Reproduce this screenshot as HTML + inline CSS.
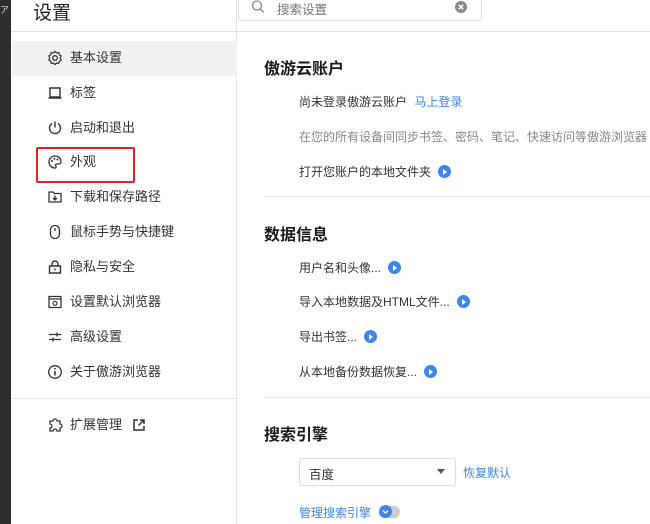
<!DOCTYPE html>
<html><head><meta charset="utf-8"><style>
*{margin:0;padding:0;box-sizing:border-box}
body{width:650px;height:524px;overflow:hidden;background:#fff;position:relative;font-family:"Liberation Sans","Noto Sans CJK SC",sans-serif;color:#222}
.a{position:absolute;white-space:nowrap}
.strip{left:0;top:0;width:11px;height:524px;background:#2e2e2e}
.side{left:11px;top:0;width:226px;height:524px;border-right:1px solid #e3e3e3}
.hline{left:11px;top:31px;width:639px;height:1px;background:#e3e3e3}
.item{font-size:13px;color:#333;line-height:16px}
.ic{position:absolute;left:47px;width:16px;height:16px}
.h{font-size:16px;font-weight:bold;color:#1a1a1a}
.t{font-size:12px;color:#333}
.play{display:inline-block;width:13px;height:13px;border-radius:50%;background:#3d86ef;position:relative;vertical-align:-2px;margin-left:7px}
.play:after{content:"";position:absolute;left:5px;top:3.5px;border-left:4px solid #fff;border-top:3px solid transparent;border-bottom:3px solid transparent}
.blue{color:#3d86ef}
</style></head><body>
<div class="a strip"></div>
<div class="a" style="left:0;top:3px;width:8px;height:8px;color:#ddd;font-size:9px">ア</div>
<div class="a side"></div>
<div class="a" style="left:33px;top:-2px;font-size:19px;color:#222">设置</div>
<div class="a" style="left:238px;top:-6px;width:244px;height:27px;border:1px solid #ddd;border-radius:3px;background:#fff"></div>
<svg class="a" style="left:251px;top:0" width="14" height="14" viewBox="0 0 14 14"><circle cx="6" cy="5.5" r="4.5" fill="none" stroke="#888" stroke-width="1.3"/><path d="M9.3 9l3.5 3.5" stroke="#888" stroke-width="1.3"/></svg>
<div class="a" style="left:277px;top:-1px;font-size:12.5px;color:#777">搜索设置</div>
<svg class="a" style="left:455px;top:1px" width="12" height="12" viewBox="0 0 12 12"><circle cx="6" cy="6" r="6" fill="#888"/><path d="M3.8 3.8l4.4 4.4M8.2 3.8l-4.4 4.4" stroke="#fff" stroke-width="1.4"/></svg>
<div class="a hline"></div>
<div class="a" style="left:12px;top:41px;width:225px;height:35px;background:#f1f1f1"></div>

<svg class="ic a" style="top:50px" viewBox="0 0 16 16"><circle cx="8" cy="8" r="2.3" fill="none" stroke="#333" stroke-width="1.3"/><path d="M8 1.5l1.6 1.5 2.2-.3.5 2.1 1.9 1.2-1 2 1 2-1.9 1.2-.5 2.1-2.2-.3L8 14.5l-1.6-1.5-2.2.3-.5-2.1-1.9-1.2 1-2-1-2 1.9-1.2.5-2.1 2.2.3z" fill="none" stroke="#333" stroke-width="1.2"/></svg>
<div class="a item" style="left:70px;top:50px">基本设置</div>
<svg class="ic a" style="top:85px" viewBox="0 0 16 16"><path d="M3 3h10v9H3zM1.5 13h13" fill="none" stroke="#333" stroke-width="1.4"/></svg>
<div class="a item" style="left:70px;top:85px">标签</div>
<svg class="ic a" style="top:120px" viewBox="0 0 16 16"><path d="M5 3.5A5.5 5.5 0 1 0 11 3.5M8 1.5v6" fill="none" stroke="#333" stroke-width="1.4"/></svg>
<div class="a item" style="left:70px;top:120px">启动和退出</div>
<svg class="ic a" style="top:154px" viewBox="0 0 16 16"><path d="M8 2a6 6 0 1 0 0 12c1.5 0 1.3-1.5.7-2.3-.6-.8 0-1.7 1-1.7H12a2.5 2.5 0 0 0 2-2.5C14 4.5 11.5 2 8 2z" fill="none" stroke="#333" stroke-width="1.3"/><circle cx="5" cy="7" r="1" fill="#333"/><circle cx="7.5" cy="4.8" r="1" fill="#333"/><circle cx="10.5" cy="5.5" r="1" fill="#333"/></svg>
<div class="a item" style="left:70px;top:154px">外观</div>
<div class="a" style="left:36px;top:147px;width:99px;height:36px;border:2px solid #e8201f;border-radius:2px"></div>
<svg class="ic a" style="top:189px" viewBox="0 0 16 16"><path d="M2 3h4l1.5 1.5H14V13H2zM8 6.5v4.5M6 9l2 2 2-2" fill="none" stroke="#333" stroke-width="1.3"/></svg>
<div class="a item" style="left:70px;top:189px">下载和保存路径</div>
<svg class="ic a" style="top:224px" viewBox="0 0 16 16"><rect x="3.5" y="1.5" width="9" height="13" rx="4.5" fill="none" stroke="#333" stroke-width="1.3"/><path d="M8 4v3" stroke="#333" stroke-width="1.3"/></svg>
<div class="a item" style="left:70px;top:224px">鼠标手势与快捷键</div>
<svg class="ic a" style="top:259px" viewBox="0 0 16 16"><path d="M5 7V5a3 3 0 0 1 6 0v2M2.5 7h11v7h-11zM8 9.5v2" fill="none" stroke="#333" stroke-width="1.4"/></svg>
<div class="a item" style="left:70px;top:259px">隐私与安全</div>
<svg class="ic a" style="top:294px" viewBox="0 0 16 16"><path d="M2 2.5h12v11H2zM2 5h12" fill="none" stroke="#333" stroke-width="1.3"/><circle cx="8" cy="9.3" r="2" fill="none" stroke="#333" stroke-width="1.2"/></svg>
<div class="a item" style="left:70px;top:294px">设置默认浏览器</div>
<svg class="ic a" style="top:329px" viewBox="0 0 16 16"><path d="M2 5.5h12M2 10.5h12M10 3.5v4M6 8.5v4" fill="none" stroke="#333" stroke-width="1.3"/></svg>
<div class="a item" style="left:70px;top:329px">高级设置</div>
<svg class="ic a" style="top:364px" viewBox="0 0 16 16"><circle cx="8" cy="8" r="6.3" fill="none" stroke="#333" stroke-width="1.3"/><path d="M8 7v4.5" stroke="#333" stroke-width="1.5"/><circle cx="8" cy="4.8" r=".9" fill="#333"/></svg>
<div class="a item" style="left:70px;top:364px">关于傲游浏览器</div>
<div class="a" style="left:12px;top:398px;width:225px;height:1px;background:#e3e3e3"></div>
<svg class="ic a" style="top:417px" viewBox="0 0 16 16"><path d="M3 4h3a2 2 0 0 1 4 0h3v3a2 2 0 0 1 0 4v3h-3a2 2 0 0 0-4 0H3v-3a2 2 0 0 0 0-4z" fill="none" stroke="#333" stroke-width="1.3"/></svg>
<div class="a item" style="left:70px;top:417px">扩展管理</div>
<svg class="a" style="left:132px;top:418px" width="14" height="14" viewBox="0 0 14 14"><path d="M6 2H2v10h10V8M8 2h4v4M12 2L6.5 7.5" fill="none" stroke="#333" stroke-width="1.5"/></svg>

<div class="a h" style="left:264px;top:55px">傲游云账户</div>
<div class="a t" style="left:299px;top:93px">尚未登录傲游云账户 <span class="blue" style="margin-left:4px">马上登录</span></div>
<div class="a t" style="left:299px;top:128px;color:#888">在您的所有设备间同步书签、密码、笔记、快速访问等傲游浏览器</div>
<div class="a t" style="left:299px;top:163px">打开您账户的本地文件夹<span class="play"></span></div>
<div class="a" style="left:264px;top:196px;width:386px;height:1px;background:#e3e3e3"></div>
<div class="a h" style="left:264px;top:221px">数据信息</div>
<div class="a t" style="left:299px;top:259px">用户名和头像...<span class="play"></span></div>
<div class="a t" style="left:299px;top:293px">导入本地数据及HTML文件...<span class="play"></span></div>
<div class="a t" style="left:299px;top:328px">导出书签...<span class="play"></span></div>
<div class="a t" style="left:299px;top:363px">从本地备份数据恢复...<span class="play"></span></div>
<div class="a" style="left:264px;top:397px;width:386px;height:1px;background:#e3e3e3"></div>
<div class="a h" style="left:264px;top:421px">搜索引擎</div>
<div class="a" style="left:299px;top:458px;width:157px;height:28px;border:1px solid #ddd;border-radius:3px"></div>
<div class="a t" style="left:309px;top:464px;font-size:12.5px">百度</div>
<div class="a" style="left:437px;top:469px;border-top:5px solid #555;border-left:4.5px solid transparent;border-right:4.5px solid transparent"></div>
<div class="a t blue" style="left:463px;top:464px">恢复默认</div>
<div class="a t blue" style="left:299px;top:504px">管理搜索引擎</div>
<div class="a" style="left:379px;top:506px;width:21px;height:12px;border-radius:6px;background:#ccc"></div>
<div class="a" style="left:379px;top:505px;width:13px;height:13px;border-radius:50%;background:#3d86ef"></div>
<svg class="a" style="left:382px;top:508px" width="7" height="7" viewBox="0 0 7 7"><path d="M1 2.5l2.5 2.5 2.5-2.5" fill="none" stroke="#fff" stroke-width="1.3"/></svg>
</body></html>
